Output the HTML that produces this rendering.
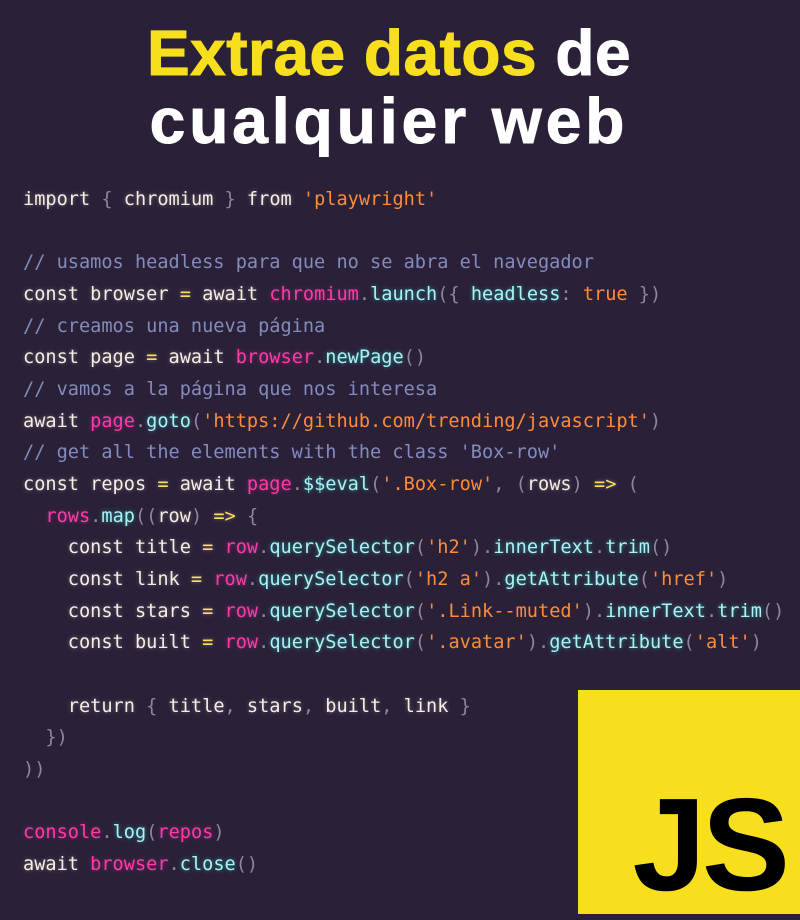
<!DOCTYPE html>
<html><head><meta charset="utf-8"><style>
html,body{margin:0;padding:0}
body{width:800px;height:914px;background:#2a2139;position:relative;overflow:hidden;font-family:"DejaVu Sans Mono","Liberation Mono",monospace}
.t{position:absolute;left:0;width:778px;text-align:center;font-family:"Liberation Sans",sans-serif;font-weight:bold;font-size:64px;line-height:68px;color:#fff;letter-spacing:0.5px;-webkit-text-stroke:1px currentColor}
.y{color:#f7df1e}
pre{position:absolute;left:23px;top:184px;margin:0;font-size:18.6px;line-height:31.67px;color:#f4eee4;font-family:"DejaVu Sans Mono",monospace;text-shadow:0 0 4px rgba(255,240,220,.35)}
.c{color:#848bbd;text-shadow:none}
.p{color:#ff3aa8;text-shadow:0 0 4px rgba(255,60,170,.4)}
.f{color:#a8f4f2;text-shadow:0 0 4px rgba(54,249,246,.5)}
.s{color:#ff8b39;text-shadow:none}
.o{color:#fede5d}
.g{color:#8e879b;text-shadow:none}
.js{position:absolute;left:578px;top:690px;width:222px;height:224px;background:#f7df1e}
.js span{position:absolute;right:14px;bottom:-6px;font-family:"Liberation Sans",sans-serif;font-weight:bold;font-size:132px;color:#000;letter-spacing:-4px}
</style></head><body>
<div class="t" style="top:19px"><span class="y">Extrae datos</span> de</div>
<div class="t" style="top:87px;letter-spacing:4px">cualquier web</div>
<pre>import <span class="g">{</span> chromium <span class="g">}</span> from <span class="s">'playwright'</span>

<span class="c">// usamos headless para que no se abra el navegador</span>
const browser <span class="o">=</span> await <span class="p">chromium</span><span class="g">.</span><span class="f">launch</span><span class="g">({</span> <span class="f">headless</span><span class="g">:</span> <span class="s">true</span> <span class="g">})</span>
<span class="c">// creamos una nueva página</span>
const page <span class="o">=</span> await <span class="p">browser</span><span class="g">.</span><span class="f">newPage</span><span class="g">()</span>
<span class="c">// vamos a la página que nos interesa</span>
await <span class="p">page</span><span class="g">.</span><span class="f">goto</span><span class="g">(</span><span class="s">'https://github.com/trending/javascript'</span><span class="g">)</span>
<span class="c">// get all the elements with the class 'Box-row'</span>
const repos <span class="o">=</span> await <span class="p">page</span><span class="g">.</span><span class="f">$$eval</span><span class="g">(</span><span class="s">'.Box-row'</span><span class="g">, (</span>rows<span class="g">)</span> <span class="o">=&gt;</span> <span class="g">(</span>
  <span class="p">rows</span><span class="g">.</span><span class="f">map</span><span class="g">((</span>row<span class="g">)</span> <span class="o">=&gt;</span> <span class="g">{</span>
    const title <span class="o">=</span> <span class="p">row</span><span class="g">.</span><span class="f">querySelector</span><span class="g">(</span><span class="s">'h2'</span><span class="g">).</span><span class="f">innerText</span><span class="g">.</span><span class="f">trim</span><span class="g">()</span>
    const link <span class="o">=</span> <span class="p">row</span><span class="g">.</span><span class="f">querySelector</span><span class="g">(</span><span class="s">'h2 a'</span><span class="g">).</span><span class="f">getAttribute</span><span class="g">(</span><span class="s">'href'</span><span class="g">)</span>
    const stars <span class="o">=</span> <span class="p">row</span><span class="g">.</span><span class="f">querySelector</span><span class="g">(</span><span class="s">'.Link--muted'</span><span class="g">).</span><span class="f">innerText</span><span class="g">.</span><span class="f">trim</span><span class="g">()</span>
    const built <span class="o">=</span> <span class="p">row</span><span class="g">.</span><span class="f">querySelector</span><span class="g">(</span><span class="s">'.avatar'</span><span class="g">).</span><span class="f">getAttribute</span><span class="g">(</span><span class="s">'alt'</span><span class="g">)</span>

    return <span class="g">{</span> title<span class="g">,</span> stars<span class="g">,</span> built<span class="g">,</span> link <span class="g">}</span>
  <span class="g">})</span>
<span class="g">))</span>

<span class="p">console</span><span class="g">.</span><span class="f">log</span><span class="g">(</span><span class="p">repos</span><span class="g">)</span>
await <span class="p">browser</span><span class="g">.</span><span class="f">close</span><span class="g">()</span></pre>
<div class="js"><span>JS</span></div>
</body></html>
